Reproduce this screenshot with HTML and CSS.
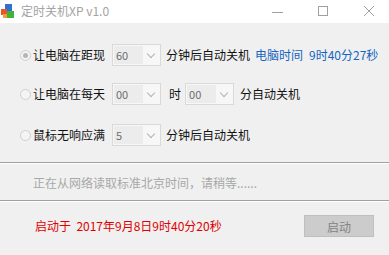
FILE: index.html
```html
<!DOCTYPE html>
<html lang="zh">
<head>
    <meta charset="UTF-8">
    <title>定时关机XP v1.0</title>
    <link rel="stylesheet" href="styles.css">
</head>
<body>
    <div class="window">
        <div class="titlebar">
            <svg class="app-icon" width="16" height="16" viewBox="0 0 16 16">
                <rect x="5" y="1" width="7" height="7" fill="#2f6fd6"/>
                <rect x="1" y="6" width="6" height="6" fill="#e8562a"/>
                <rect x="7" y="8" width="7" height="7" fill="#3fb43a"/>
                <rect x="3" y="11" width="4" height="4" fill="#f2a02c"/>
            </svg>
            <span class="title">定时关机XP v1.0</span>
            <div class="controls">
                <span class="ctl ctl-min"></span>
                <span class="ctl ctl-max"></span>
                <svg class="ctl ctl-close" width="12" height="12" viewBox="0 0 12 12">
                    <path d="M1 1 L11 11 M11 1 L1 11" stroke="#a0a0a0" stroke-width="1"/>
                </svg>
            </div>
        </div>

        <div class="content">
            <div class="row row-1">
                <span class="radio checked"></span>
                <span class="label">让电脑在距现</span>
                <div class="combo"><span class="combo-text">60</span><span class="arrow"></span></div>
                <span class="label gap">分钟后自动关机</span>
                <span class="label gap blue">电脑时间</span>
                <span class="label gap-wide blue">9时40分27秒</span>
            </div>
            <div class="row row-2">
                <span class="radio"></span>
                <span class="label">让电脑在每天</span>
                <div class="combo"><span class="combo-text">00</span><span class="arrow"></span></div>
                <span class="label hour">时</span>
                <div class="combo combo-min"><span class="combo-text">00</span><span class="arrow"></span></div>
                <span class="label gap-wide">分自动关机</span>
            </div>
            <div class="row row-3">
                <span class="radio"></span>
                <span class="label">鼠标无响应满</span>
                <div class="combo"><span class="combo-text">5</span><span class="arrow"></span></div>
                <span class="label gap">分钟后自动关机</span>
            </div>
        </div>

        <div class="sep"></div>
        <div class="status">正在从网络读取标准北京时间，请稍等......</div>
        <div class="sep"></div>

        <div class="footer">
            <span class="started">启动于&nbsp; 2017年9月8日9时40分20秒</span>
            <button class="start-btn" disabled>启动</button>
        </div>
    </div>
</body>
</html>
```

FILE: styles.css
```css
* {
    box-sizing: border-box;
    margin: 0;
    padding: 0;
}

body {
    font-family: "Noto Sans CJK SC", "Liberation Sans", sans-serif;
    font-size: 12px;
    color: #111;
    background-color: #f0f0f0;
    width: 389px;
    height: 255px;
    overflow: hidden;
}

.titlebar {
    height: 23px;
    background: #fff;
    display: flex;
    align-items: center;
}

.app-icon {
    margin-top: -2px;
}

.title {
    margin-left: 5px;
    color: #a3a3a3;
    font-size: 12px;
    margin-top: -3px;
}

.controls {
    margin-left: auto;
    display: flex;
    align-items: center;
    height: 100%;
}

.ctl {
    display: block;
}

.ctl-min {
    width: 11px;
    height: 1px;
    background: #a0a0a0;
    margin-right: 35px;
    margin-top: 1px;
}

.ctl-max {
    width: 10px;
    height: 10px;
    border: 1px solid #a0a0a0;
    margin-right: 35px;
    margin-top: -2px;
}

.ctl-close {
    margin-right: 14px;
    margin-top: -2px;
}

.content {
    padding-left: 20px;
}

.row {
    display: flex;
    align-items: center;
    height: 22px;
}

.row-1 { margin-top: 21px; }
.row-2 { margin-top: 17px; }
.row-3 { margin-top: 19px; }

.radio {
    width: 11px;
    height: 11px;
    border-radius: 50%;
    border: 1px solid #cfcfcf;
    background: #f4f4f4;
    margin-right: 2px;
    position: relative;
}

.radio.checked::after {
    content: '';
    position: absolute;
    left: 2px;
    top: 2px;
    width: 5px;
    height: 5px;
    border-radius: 50%;
    background: #b5b5b5;
}

.label {
    white-space: nowrap;
    line-height: 22px;
}

.gap {
    margin-left: 5px;
}

.gap-wide {
    margin-left: 6px;
}

.blue {
    color: #1565c0;
}

.hour {
    margin-left: 8px;
}

.combo {
    width: 49px;
    height: 22px;
    border: 1px solid #d9d9d9;
    background: #f7f7f7;
    margin-left: 7px;
    display: flex;
    align-items: center;
    position: relative;
}

.combo-min {
    margin-left: 4px;
}

.combo-text {
    height: 18px;
    width: 29px;
    margin-left: 1px;
    background: #ececec;
    color: #6d6d6d;
    font-size: 11px;
    line-height: 18px;
    padding-left: 2px;
}

.arrow {
    position: absolute;
    right: 6px;
    top: 6px;
    width: 6px;
    height: 6px;
    border-right: 1px solid #b3b3b3;
    border-bottom: 1px solid #b3b3b3;
    transform: rotate(45deg);
}

.sep {
    height: 2px;
    border-top: 1px solid #a0a0a0;
    border-bottom: 1px solid #fff;
}

.content + .sep {
    margin-top: 16px;
}

.status {
    color: #a8a8a8;
    padding-left: 33px;
    height: 36px;
    line-height: 38px;
}

.footer {
    display: flex;
    align-items: center;
    padding-left: 35px;
    padding-right: 15px;
    margin-top: 13px;
}

.started {
    color: #e00000;
    margin-top: -2px;
}

.start-btn {
    margin-left: auto;
    width: 70px;
    height: 22px;
    background: #cccccc;
    border: 1px solid #bfbfbf;
    color: #838383;
    font-family: "Noto Sans CJK SC", sans-serif;
    font-size: 12px;
}
```
